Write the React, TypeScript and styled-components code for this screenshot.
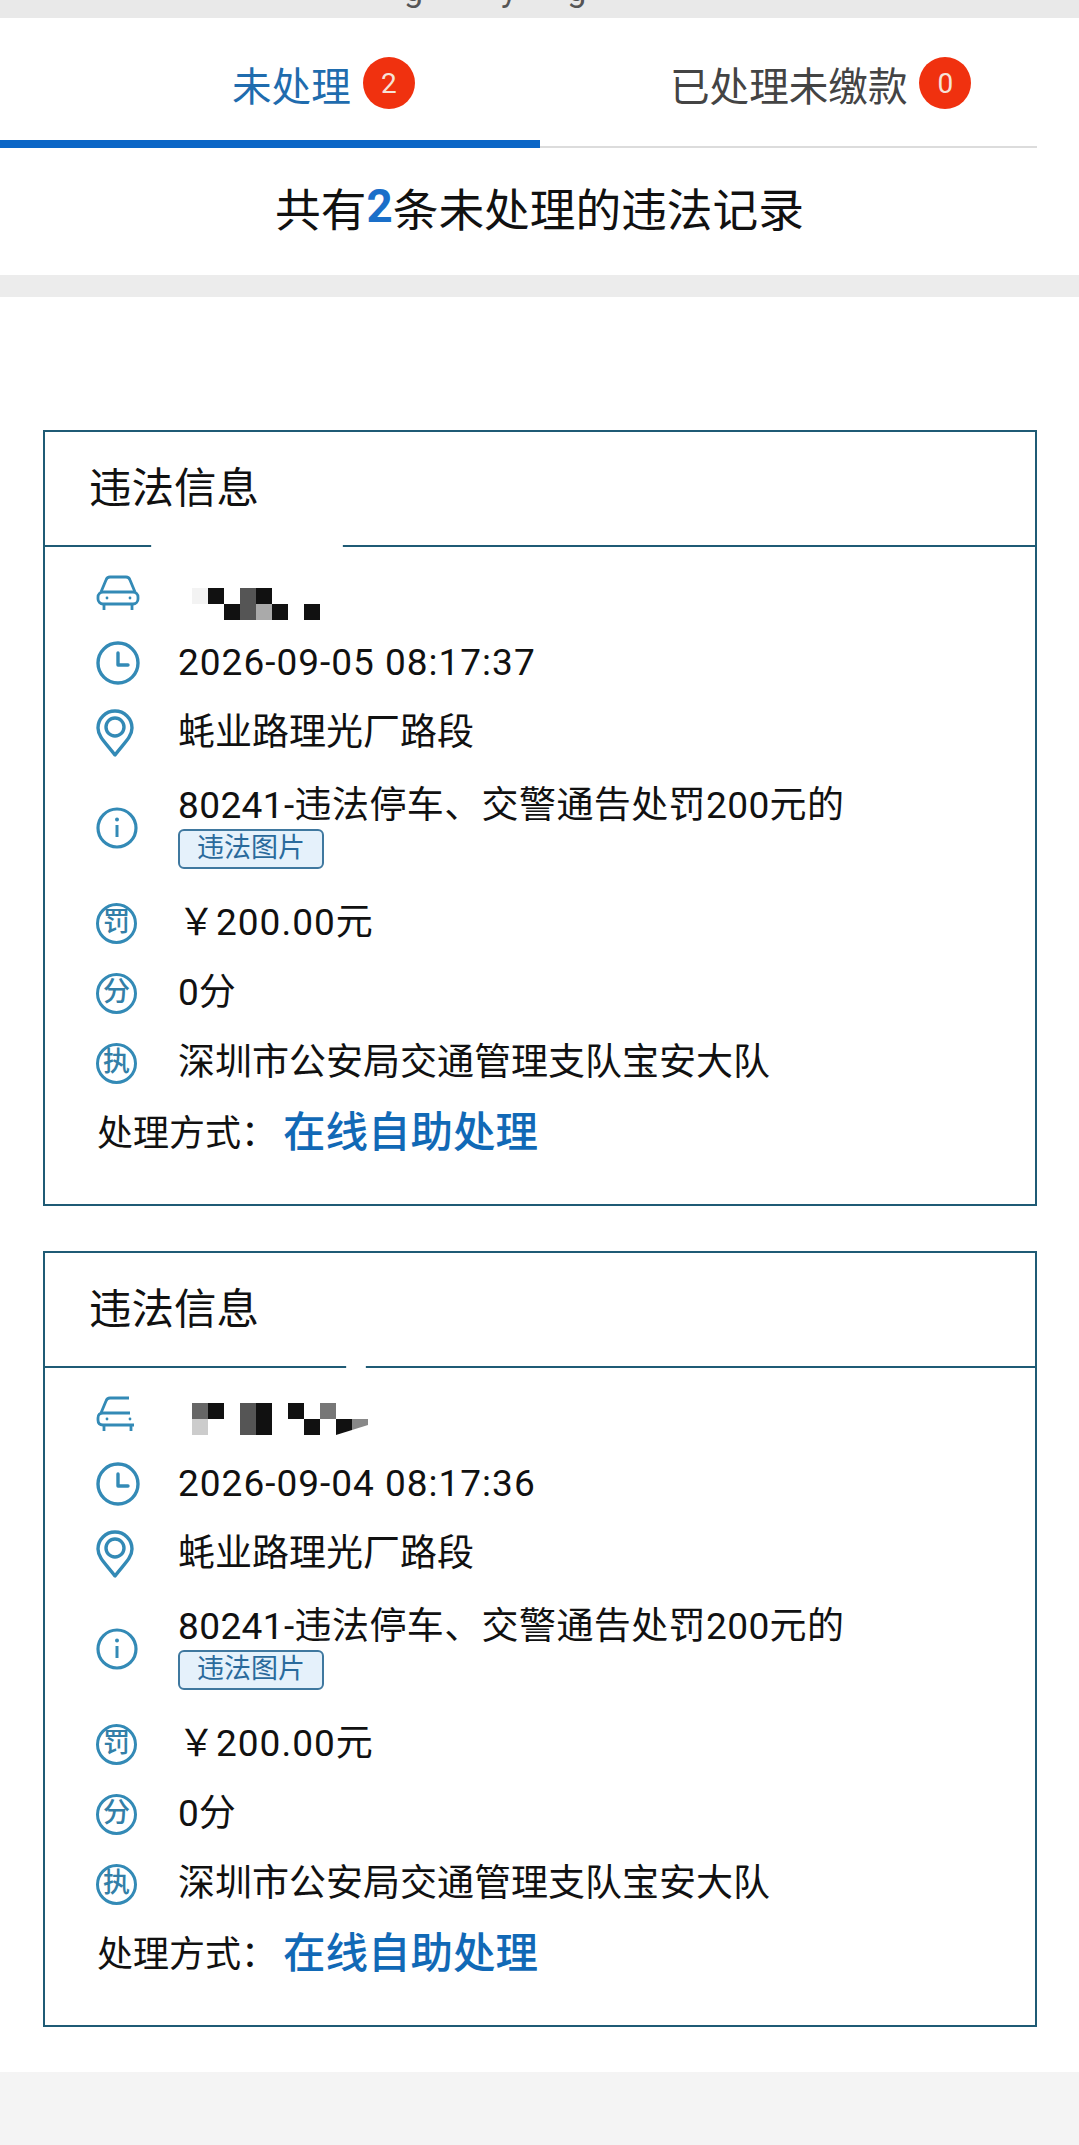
import React from 'react'
import styled, { createGlobalStyle } from 'styled-components'

const iconColor = '#338ab6'
const cell = 16

type Cell = [number, number, string]

type Violation = {
    plate: Cell[]
    plateDrop: number
    time: string
    openCar?: boolean
    smudge: { left: number; width: number }
}

const violations: Violation[] = [
    {
        time: '2026-09-05 08:17:37',
        smudge: { left: 106, width: 192 },
        plateDrop: 22,
        plate: [
            [0, 0, '#f3f3f3'], [1, 0, '#111'], [3, 0, '#555'], [4, 0, '#111'],
            [2, 1, '#111'], [3, 1, '#555'], [4, 1, '#aaa'], [5, 1, '#111'], [7, 1, '#111'],
        ],
    },
    {
        time: '2026-09-04 08:17:36',
        openCar: true,
        smudge: { left: 301, width: 20 },
        plateDrop: 10,
        plate: [
            [0, 0, '#666'], [1, 0, '#111'], [3, 0, '#555'], [4, 0, '#111'], [6, 0, '#111'], [8, 0, '#777'],
            [0, 1, '#ccc'], [3, 1, '#555'], [4, 1, '#111'], [7, 1, '#111'],
        ],
    },
]

const GlobalStyle = createGlobalStyle`
    html, body {
        margin: 0;
        padding: 0;
        background: #fff;
    }
    * {
        box-sizing: border-box;
    }
`

const Page = styled.div`
    width: 1079px;
    min-height: 2145px;
    background: #fff;
    color: #111;
    font-family: Roboto, "Noto Sans CJK SC", sans-serif;
`

const TopBand = styled.div`
    height: 18px;
    background: #e9e9e9;
    overflow: hidden;
    display: flex;
    padding-left: 404px;
`

const TopGlyph = styled.span<{ $gap?: number }>`
    font-size: 34px;
    line-height: 34px;
    margin-top: -28px;
    margin-left: ${(p) => p.$gap ?? 0}px;
    color: #555;
`

const Tabs = styled.div`
    display: flex;
    height: 130px;
    padding-right: 42px;
`

const Tab = styled.div<{ $active?: boolean }>`
    display: flex;
    align-items: center;
    gap: 12px;
    width: ${(p) => (p.$active ? '540px' : '497px')};
    height: 130px;
    padding-left: ${(p) => (p.$active ? '232px' : '130px')};
    padding-top: ${(p) => (p.$active ? '8px' : '2px')};
    font-size: 39.6px;
    color: ${(p) => (p.$active ? '#1f6cae' : '#444')};
    border-bottom: ${(p) => (p.$active ? '8px solid #0b66c6' : '2px solid #dcdcdc')};
    margin-bottom: ${(p) => (p.$active ? '0' : '1px')};
`

const TabBadge = styled.span`
    width: 52px;
    height: 52px;
    border-radius: 50%;
    background: #f0310f;
    color: #f6e3d8;
    font-size: 28px;
    display: flex;
    align-items: center;
    justify-content: center;
`

const Summary = styled.div`
    height: 127px;
    padding-bottom: 10px;
    display: flex;
    align-items: center;
    justify-content: center;
    font-size: 45.7px;
    color: #111;
`

const SummaryCount = styled.b`
    color: #1a6fc9;
    font-weight: 700;
`

const Band = styled.div`
    height: 22px;
    background: #ececec;
`

const Cards = styled.div`
    display: flex;
    flex-direction: column;
    gap: 45px;
    padding: 133px 42px 45px 43px;
`

const Card = styled.section`
    height: 776px;
    border: 2px solid #1f5b75;
`

const CardHeader = styled.div`
    position: relative;
    height: 115px;
    padding: 0 0 8px 44px;
    display: flex;
    align-items: center;
    font-size: 42.5px;
    border-bottom: 2px solid #1f5b75;
`

const Smudge = styled.div<{ $left: number; $width: number }>`
    position: absolute;
    left: ${(p) => p.$left}px;
    width: ${(p) => p.$width}px;
    bottom: -3px;
    height: 4px;
    border-radius: 2px;
    background: #fff;
`

const CardBody = styled.div`
    padding: 11px 0 0 51px;
`

const Row = styled.div<{ $height?: number }>`
    display: grid;
    grid-template-columns: 82px 1fr;
    align-items: center;
    height: ${(p) => p.$height ?? 70}px;
    font-size: 37px;
    line-height: 40px;
`

const IconCell = styled.div`
    width: 44px;
    display: flex;
    justify-content: flex-start;
`

const Plate = styled.svg<{ $drop: number }>`
    display: block;
    margin: ${(p) => p.$drop}px 0 0 14px;
`

const TimeText = styled.div`
    letter-spacing: 1px;
`

const Amount = styled.span`
    letter-spacing: 1px;
`

const Detail = styled.div`
    padding: 0 0 2px;
`

const DetailText = styled.div`
    letter-spacing: 0.4px;
    line-height: 40px;
    white-space: nowrap;
`

const PhotoTag = styled.div`
    width: 146px;
    height: 40px;
    margin-top: 3px;
    border: 2px solid #3f789f;
    border-radius: 6px;
    background: #e5f1fb;
    color: #2a6a9c;
    font-size: 27px;
    line-height: 35px;
    text-align: center;
`

const CharIcon = styled.span`
    width: 41px;
    height: 41px;
    border: 3px solid ${iconColor};
    border-radius: 50%;
    color: #337fa8;
    font-size: 27px;
    font-weight: 500;
    line-height: 33px;
    text-align: center;
`

const MethodRow = styled.div`
    display: flex;
    align-items: center;
    height: 60px;
    padding-left: 1px;
    font-size: 36px;
`

const MethodLabel = styled.span`
    margin-top: 4px;
`

const MethodLink = styled.a`
    font-size: 42.5px;
    font-weight: 500;
    color: #1169b6;
    margin-left: 6px;
`

const BottomBand = styled.div`
    height: 73px;
    background: #f4f4f4;
`

const Car = ({ open }: { open?: boolean }) => (
    <svg width="44" height="37" viewBox="0 0 44 37" fill="none" stroke={iconColor} strokeWidth="2.8">
        {open ? (
            <>
                <path d="M5 17 L10 5 Q11 2 14 2 H33" />
                <path d="M34 17 H7 Q2 17 2 22 V24 Q2 29 7 29 H38" />
                <path d="M8 29 V35 M35 29 V35" />
            </>
        ) : (
            <>
                <path d="M5 17 L10 5 Q11 2 14 2 H30 Q33 2 34 5 L39 17" />
                <rect x="2" y="17" width="40" height="12" rx="5" />
                <path d="M8 29 V35 M36 29 V35" />
            </>
        )}
        <circle cx="11" cy="23" r="1.4" fill={iconColor} stroke="none" />
        <circle cx="34" cy="23" r="1.4" fill={iconColor} stroke="none" />
    </svg>
)

const Clock = () => (
    <svg width="44" height="44" viewBox="0 0 44 44" fill="none" stroke={iconColor} strokeWidth="3.4">
        <circle cx="22" cy="22" r="20" />
        <path d="M22 12 V24 H32" strokeLinecap="round" strokeLinejoin="round" />
    </svg>
)

const Pin = () => (
    <svg width="38" height="48" viewBox="0 0 38 48" fill="none" stroke={iconColor} strokeWidth="3.4">
        <path d="M19 46 C11 35 2 28 2 19 A17 17 0 0 1 36 19 C36 28 27 35 19 46 Z" strokeLinejoin="round" />
        <circle cx="19" cy="18" r="9" />
    </svg>
)

const InfoIcon = () => (
    <svg width="42" height="42" viewBox="0 0 42 42" fill="none" stroke={iconColor} strokeWidth="3.2">
        <circle cx="21" cy="21" r="19" />
        <path d="M21 18 V30" strokeWidth="3" />
        <circle cx="21" cy="12.5" r="2" fill={iconColor} stroke="none" />
    </svg>
)

// 打码后的车牌
const PlateMosaic = ({ cells, drop, tail }: { cells: Cell[]; drop: number; tail?: boolean }) => (
    <Plate $drop={drop} width={cell * 11} height={cell * 2} viewBox={`0 0 ${cell * 11} ${cell * 2}`}>
        {cells.map(([x, y, color]) => (
            <rect key={`${x}-${y}`} x={x * cell} y={y * cell} width={cell} height={cell} fill={color} />
        ))}
        {tail && (
            <>
                <polygon points="144,16 160,16 160,27 144,32" fill="#111" />
                <polygon points="160,16 176,16 176,22 160,27" fill="#888" />
            </>
        )}
    </Plate>
)

const ViolationCard = ({ item }: { item: Violation }) => (
    <Card>
        <CardHeader>
            违法信息
            <Smudge $left={item.smudge.left} $width={item.smudge.width} />
        </CardHeader>
        <CardBody>
            <Row>
                <IconCell><Car open={item.openCar} /></IconCell>
                <PlateMosaic cells={item.plate} drop={item.plateDrop} tail={item.openCar} />
            </Row>
            <Row>
                <IconCell><Clock /></IconCell>
                <TimeText>{item.time}</TimeText>
            </Row>
            <Row>
                <IconCell><Pin /></IconCell>
                <div>蚝业路理光厂路段</div>
            </Row>
            <Row $height={120}>
                <IconCell><InfoIcon /></IconCell>
                <Detail>
                    <DetailText>80241-违法停车、交警通告处罚200元的</DetailText>
                    <PhotoTag>违法图片</PhotoTag>
                </Detail>
            </Row>
            <Row>
                <IconCell><CharIcon>罚</CharIcon></IconCell>
                <Amount>￥200.00元</Amount>
            </Row>
            <Row>
                <IconCell><CharIcon>分</CharIcon></IconCell>
                <div>0分</div>
            </Row>
            <Row>
                <IconCell><CharIcon>执</CharIcon></IconCell>
                <div>深圳市公安局交通管理支队宝安大队</div>
            </Row>
            <MethodRow>
                <MethodLabel>处理方式：</MethodLabel>
                <MethodLink>在线自助处理</MethodLink>
            </MethodRow>
        </CardBody>
    </Card>
)

export default function App() {
    return (
        <Page>
            <GlobalStyle />
            <TopBand>
                <TopGlyph>g</TopGlyph>
                <TopGlyph $gap={78}>y</TopGlyph>
                <TopGlyph $gap={50}>g</TopGlyph>
            </TopBand>
            <Tabs>
                <Tab $active>
                    未处理
                    <TabBadge>2</TabBadge>
                </Tab>
                <Tab>
                    已处理未缴款
                    <TabBadge>0</TabBadge>
                </Tab>
            </Tabs>
            <Summary>
                共有<SummaryCount>2</SummaryCount>条未处理的违法记录
            </Summary>
            <Band />
            <Cards>
                {violations.map((item) => (
                    <ViolationCard key={item.time} item={item} />
                ))}
            </Cards>
            <BottomBand />
        </Page>
    )
}
